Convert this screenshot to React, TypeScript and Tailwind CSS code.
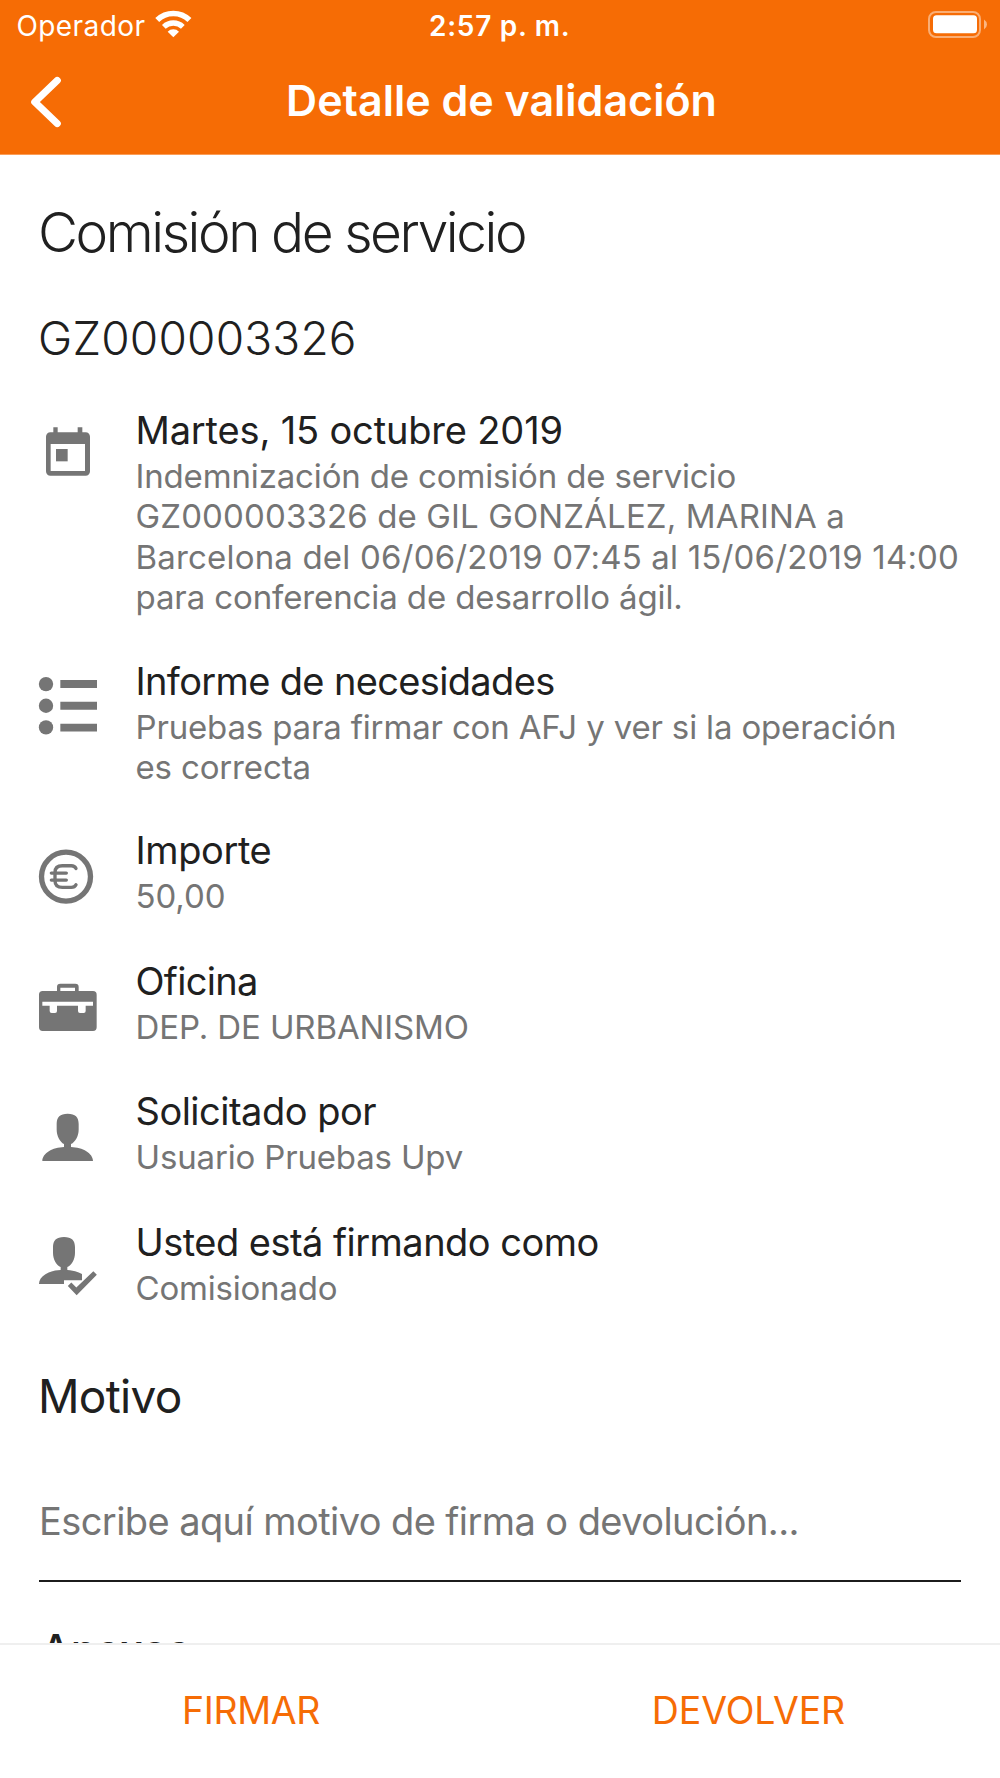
import type { ReactNode } from 'react'

type Line = { text: string; tracking: string }

type Row = {
    title: string
    titleTracking: string
    lines: Line[]
    icon: ReactNode
    spacing: string
}

function CalendarIcon() {
    return (
        <svg className="size-[60px] overflow-visible fill-[#757575]" viewBox="24 33 180 180">
            <path fillRule="evenodd" d="M70 37h13v15h60V37h14v15h10a13 13 0 0 1 13 13v104a13 13 0 0 1-13 13H61a13 13 0 0 1-13-13V65a13 13 0 0 1 13-13h9zM62 87v81h103V87z" />
            <path d="M78 102h35v37H78z" />
        </svg>
    )
}

function ListIcon() {
    return (
        <svg className="size-[60px] overflow-visible fill-[#757575]" viewBox="54 110.7 180 180">
            <circle cx="78" cy="132" r="21.5" />
            <circle cx="78" cy="197" r="21.5" />
            <circle cx="78" cy="262" r="21.5" />
            <path d="M121 120h110v24H121zM121 185h110v24H121zM121 251h110v23H121z" />
        </svg>
    )
}

function EuroIcon() {
    return (
        <svg className="size-[60px] overflow-visible" viewBox="24 32.7 180 180" fill="none" stroke="#757575">
            <circle cx="108" cy="124.5" r="73.5" strokeWidth="16" />
            <path
                d="M138 100Q134 92 124 92H97Q75 92 75 112V137Q75 157 97 157H124Q134 157 138 149M64 114H109M64 135H109"
                strokeWidth="10"
                strokeLinecap="round"
            />
        </svg>
    )
}

function BriefcaseIcon() {
    return (
        <svg className="size-[60px] overflow-visible fill-[#757575]" viewBox="24 425.1 180 180">
            <path fillRule="evenodd" d="M81 467V455a10 10 0 0 1 10-10h45a10 10 0 0 1 10 10v12h43a11 11 0 0 1 11 11v98a11 11 0 0 1-11 11H38a11 11 0 0 1-11-11v-98a11 11 0 0 1 11-11zM91 457v10h44v-10zM37 499v12h22v16a6 6 0 0 0 6 6h10a6 6 0 0 0 6-6v-16h63v16a6 6 0 0 0 6 6h11a6 6 0 0 0 6-6v-16h22v-12z" />
        </svg>
    )
}

function PersonIcon() {
    return (
        <svg className="size-[60px] overflow-visible fill-[#757575]" viewBox="24 20.7 180 180">
            <path d="M113 41C136 41 146 51 146 72V88C146 108 136 125 123 132V141C158 142 189 160 189 183H37C37 160 68 142 102 141V132C90 125 80 108 80 88V72C80 51 90 41 113 41Z" />
        </svg>
    )
}

function PersonCheckIcon() {
    return (
        <svg className="size-[60px] overflow-visible fill-[#757575]" viewBox="24 414 180 180">
            <path d="M102 411C125 411 135 421 135 442V458C135 478 125 495 112 501V510C128 511 144 515 156 522V541H102V552H27C27 529 57 511 92 510V501C79 495 69 478 69 458V442C69 421 79 411 102 411Z" />
            <path d="M113.5 558L124 547.5L139 562.5L190 513.5L200.5 524L140 585.5Z" />
        </svg>
    )
}

const rows: Row[] = [
    {
        title: 'Martes, 15 octubre 2019',
        titleTracking: 'tracking-[-0.16px]',
        lines: [
            { text: 'Indemnización de comisión de servicio', tracking: 'tracking-[-0.15px]' },
            { text: 'GZ000003326 de GIL GONZÁLEZ, MARINA a', tracking: 'tracking-[0.13px]' },
            { text: 'Barcelona del 06/06/2019 07:45 al 15/06/2019 14:00', tracking: 'tracking-[0.18px]' },
            { text: 'para conferencia de desarrollo ágil.', tracking: 'tracking-[-0.11px]' },
        ],
        icon: <CalendarIcon />,
        spacing: 'mb-[37.6px]',
    },
    {
        title: 'Informe de necesidades',
        titleTracking: 'tracking-[-0.65px]',
        lines: [
            { text: 'Pruebas para firmar con AFJ y ver si la operación', tracking: 'tracking-[-0.16px]' },
            { text: 'es correcta', tracking: 'tracking-[-0.15px]' },
        ],
        icon: <ListIcon />,
        spacing: 'mb-[36.9px]',
    },
    {
        title: 'Importe',
        titleTracking: 'tracking-[-0.4px]',
        lines: [{ text: '50,00', tracking: 'tracking-[-0.1px]' }],
        icon: <EuroIcon />,
        spacing: 'mb-[38px]',
    },
    {
        title: 'Oficina',
        titleTracking: 'tracking-[-0.7px]',
        lines: [{ text: 'DEP. DE URBANISMO', tracking: 'tracking-[-0.12px]' }],
        icon: <BriefcaseIcon />,
        spacing: 'mb-[38px]',
    },
    {
        title: 'Solicitado por',
        titleTracking: 'tracking-[-0.5px]',
        lines: [{ text: 'Usuario Pruebas Upv', tracking: 'tracking-[-0.16px]' }],
        icon: <PersonIcon />,
        spacing: 'mb-[38.4px]',
    },
    {
        title: 'Usted está firmando como',
        titleTracking: 'tracking-[-0.53px]',
        lines: [{ text: 'Comisionado', tracking: 'tracking-[-0.2px]' }],
        icon: <PersonCheckIcon />,
        spacing: 'mb-[59.6px]',
    },
]

function StatusBar() {
    return (
        <div className="grid h-[51px] grid-cols-[1fr_auto_1fr] items-center pr-[13px] pl-[16.5px] text-[28px]">
            <div className="flex items-center gap-2.5">
                <span className="tracking-[0.4px]">Operador</span>
                <svg className="mb-[3px] h-7 w-[37px]" viewBox="47 29 111 84" fill="none" stroke="white">
                    <path d="M53.7 59A69.5 69.5 0 0 1 150.3 59" strokeWidth="17" />
                    <path d="M73.5 79.5A41 41 0 0 1 130.5 79.5" strokeWidth="16" />
                    <path d="M102 111L85 94A24 24 0 0 1 119 94Z" fill="white" stroke="none" />
                </svg>
            </div>
            <span className="pr-1 font-semibold tracking-[0.72px]">2:57 p. m.</span>
            <svg className="mb-[3px] h-[27px] w-[59px] justify-self-end" viewBox="0 0 59 27">
                <rect x="1" y="1" width="51" height="25" rx="7" fill="none" stroke="white" strokeOpacity="0.45" strokeWidth="2" />
                <rect x="5" y="4.3" width="44" height="18" rx="3.5" fill="white" />
                <path d="M56 8.5Q59 10.5 59 13.5T56 18.5Z" fill="white" fillOpacity="0.5" />
            </svg>
        </div>
    )
}

function Header() {
    return (
        <header className="h-[155px] shrink-0 border-b border-[#fb9d57] bg-[#f66c05] text-white">
            <StatusBar />
            <div className="grid h-[100px] grid-cols-[100px_1fr_100px] items-center">
                <svg className="mt-px ml-7 h-[54px] w-9" viewBox="28 75 36 54" fill="none" stroke="white" strokeWidth="7.2" strokeLinecap="round" strokeLinejoin="round">
                    <path d="M57.2 80.5L34.8 102L57.2 123.5" />
                </svg>
                <h1 className="pb-0.5 pl-[3px] text-center text-[43px] leading-[50px] font-semibold">Detalle de validación</h1>
            </div>
        </header>
    )
}

export default function App() {
    return (
        <div className="flex h-[1778px] w-[1000px] flex-col overflow-hidden bg-white font-[Inter,'Liberation_Sans',sans-serif] text-[#202020]">
            <Header />
            <main className="h-[1488px] shrink-0 overflow-hidden px-[38px]">
                <h2 className="mt-[47px] text-[55px] leading-[60px] font-light tracking-[-2.45px]">Comisión de servicio</h2>
                <h3 className="mt-12 mb-[38px] text-[46px] leading-[56px] font-light tracking-[0.2px]">GZ000003326</h3>

                {rows.map((row) => (
                    <div key={row.title} className={`flex gap-[37.5px] ${row.spacing}`}>
                        <div className="mt-[22px] size-[60px] shrink-0">{row.icon}</div>
                        <div className="whitespace-nowrap">
                            <p className={`text-[38px] leading-[52px] ${row.titleTracking}`}>{row.title}</p>
                            <p className="text-[33px] leading-[40.33px] text-[#757575]">
                                {row.lines.map((line) => (
                                    <span key={line.text} className={`block ${line.tracking}`}>{line.text}</span>
                                ))}
                            </p>
                        </div>
                    </div>
                ))}

                <h3 className="text-[46px] leading-[56px] tracking-[-0.7px]">Motivo</h3>
                <div className="mt-[74.5px] mr-px ml-px border-b-2 border-[#1c1c1c] pb-9">
                    <p className="text-[38px] leading-[46px] tracking-[-0.58px] text-[#757575]">
                        Escribe aquí motivo de firma o devolución...
                    </p>
                </div>
                {/* runs under the footer, only the top of the heading shows */}
                <h3 className="mt-[43px] ml-[3px] text-[42px] leading-[50px] font-medium">Anexos</h3>
            </main>
            <footer className="grid h-[135px] shrink-0 grid-cols-2 items-center border-t-2 border-[#efefef] bg-white text-[37.5px] text-[#f66c05]">
                <button className="pl-0.5 tracking-[-0.4px]">FIRMAR</button>
                <button className="pr-[3px] tracking-[-0.1px]">DEVOLVER</button>
            </footer>
        </div>
    )
}
